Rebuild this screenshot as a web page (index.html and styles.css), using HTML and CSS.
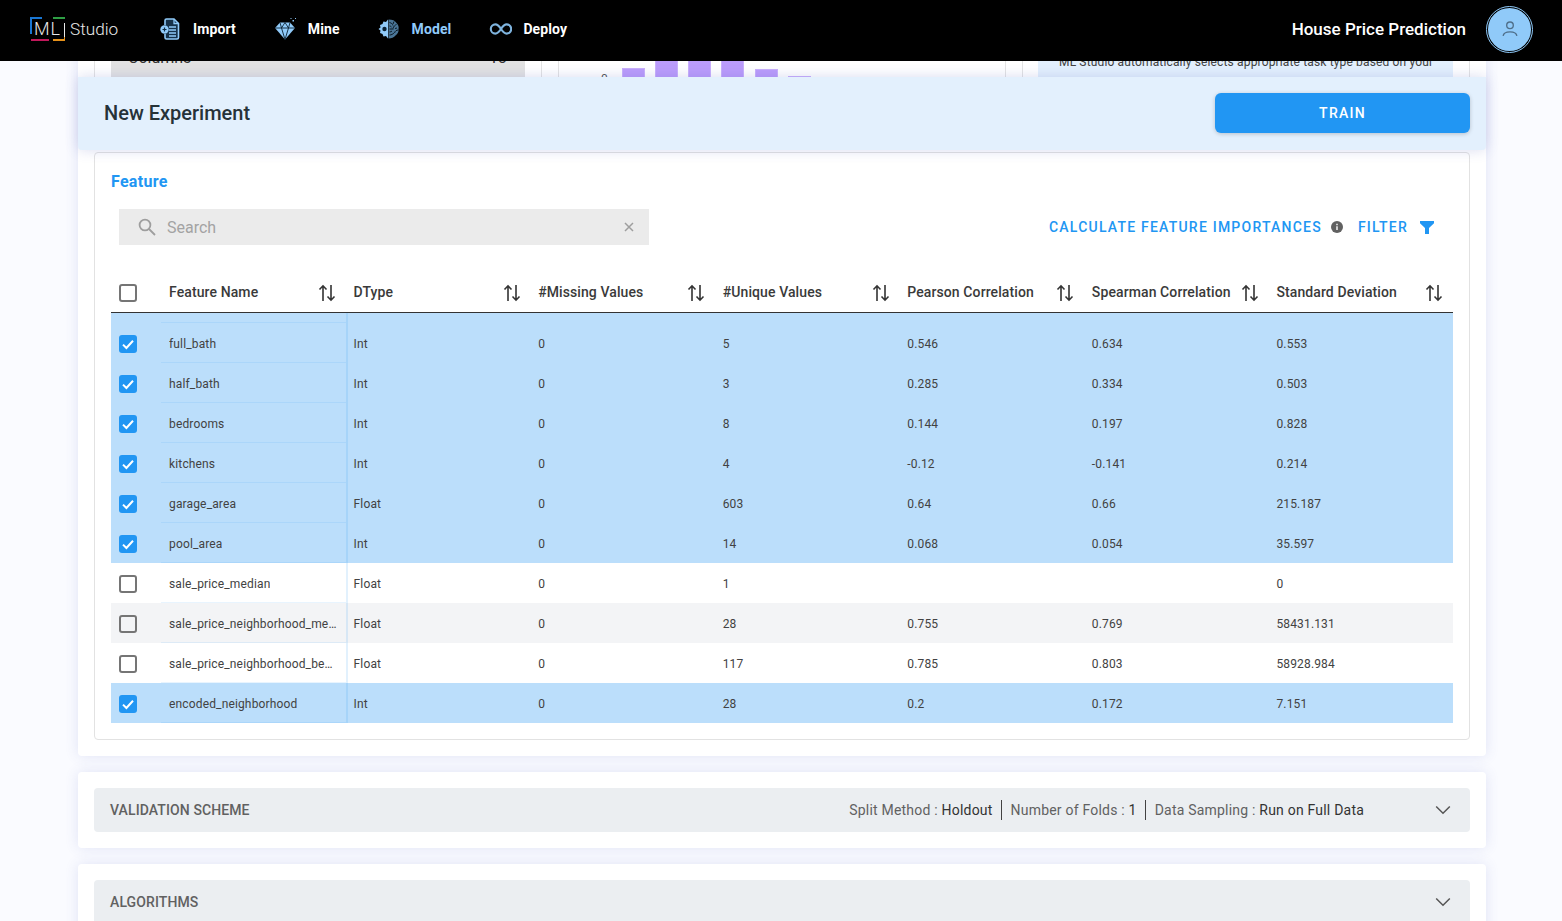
FILE: index.html
```html
<!DOCTYPE html>
<html lang="en">
<head>
<meta charset="utf-8">
<title>ML Studio</title>
<link rel="stylesheet" href="styles.css">
</head>
<body>
<svg class="defs" width="0" height="0" aria-hidden="true">
  <symbol id="sort" viewBox="0 0 18 18">
    <path d="M5 17V2M1.5 5.5 5 1.8l3.5 3.7M13 1v15M9.5 12.5 13 16.2l3.5-3.7" fill="none" stroke="currentColor" stroke-width="1.6"/>
  </symbol>
  <symbol id="check" viewBox="0 0 18 18">
    <rect width="18" height="18" rx="3" fill="#2196f3"/>
    <path d="M4 9.6 7.4 13 14 5.8" fill="none" stroke="#fff" stroke-width="2"/>
  </symbol>
  <symbol id="chev" viewBox="0 0 16 10">
    <path d="M1.2 1.5 8 8.2l6.8-6.7" fill="none" stroke="currentColor" stroke-width="1.5"/>
  </symbol>
</svg>

<header class="topbar">
  <div class="logo">
    <span class="logo-mark">ML<i class="br br-b"></i><i class="br br-g"></i><i class="br br-w"></i><i class="br br-r"></i><i class="br br-o"></i></span>
    <span class="logo-word">Studio</span>
  </div>
  <nav class="nav">
    <a class="nav-item">
      <svg class="nav-icon" viewBox="0 0 24 24"><path d="M7 8V3.500A1.500 1.500 0 0 1 8.500 2H16l4.500 4.500v14A1.500 1.500 0 0 1 19 22H8.500A1.500 1.500 0 0 1 7 20.500V17" fill="#16324a" stroke="#90caf9" stroke-width="1.600"/><path d="M16 2v4.500h4.500" fill="none" stroke="#90caf9" stroke-width="1.300"/><path d="M11 10h7M11 13h7M11 16h7M11 19h7" stroke="#90caf9" stroke-width="1.400"/><circle cx="6.500" cy="12.500" r="4.200" fill="#90caf9"/><path d="M4.500 12.500h4M6.500 10.500v4" stroke="#0d2a40" stroke-width="1.200"/></svg>
      <span>Import</span>
    </a>
    <a class="nav-item">
      <svg class="nav-icon" viewBox="0 0 24 24"><path d="M7 5.500h10l5 5.500L12 22.500 2 11z" fill="#90caf9"/><path d="M2 11h20M8.500 11 12 22.500 15.500 11 12 5.500zM7 5.500 8.500 11M17 5.500 15.500 11" fill="none" stroke="#0b2233" stroke-width=".9"/><path d="M19.500 3h1.500v1.500h-1.500zM22 1h1v1h-1zM17.500 1h1v1h-1z" fill="#90caf9"/></svg>
      <span>Mine</span>
    </a>
    <a class="nav-item nav-active">
      <svg class="nav-icon" viewBox="0 0 24 24"><path d="M11 2.500 9 5 6.500 4.500 5.500 7 3 8l.5 2.500L1.500 12l2 1.500L3 16l2.500 1 1 2.500L9 19l2 2.500z" fill="#90caf9"/><path d="M11.500 2.500c4 0 6.500 1 8 3.500 2 2 2.500 4 2 6 .5 3-1 5-3 6.500-1.500 2-4 3-7 3z" fill="#4a7596"/><path d="M12.500 5.500c2 .5 3 1.500 3.500 3M19.500 7.500c-1.500.5-3 2-3.500 4M12.500 12h4M21.500 13c-2 0-3.500 1-4 3M12.500 18c2 0 3.500-1 4.500-2M12.500 9c1 0 1.500.5 2 1M12.500 15c1 0 2-.5 2.500-1M17 4.500l-1 2.500M20 11l-2 .5" fill="none" stroke="#0b1a26" stroke-width="1"/><circle cx="7.500" cy="12" r="2.200" fill="#0b2233"/></svg>
      <span>Model</span>
    </a>
    <a class="nav-item">
      <svg class="nav-icon" viewBox="0 0 24 24"><path d="M13 12c-1.900-2.900-3.500-4.600-5.600-4.600a4.600 4.600 0 0 0 0 9.200C9.500 16.600 11.100 14.900 13 12c1.900-2.900 3.500-4.600 5.600-4.600a4.600 4.600 0 0 1 0 9.200C16.500 16.600 14.900 14.900 13 12z" fill="none" stroke="#7fb4de" stroke-width="2.100"/></svg>
      <span>Deploy</span>
    </a>
  </nav>
  <div class="project">House Price Prediction</div>
  <div class="avatar">
    <svg viewBox="0 0 24 24" class="avatar-icon"><circle cx="12" cy="8" r="3.600" fill="none" stroke="#4f6f8a" stroke-width="1.500"/><path d="M4.500 19.500c.5-3 3.500-4.300 7.500-4.300s7 1.300 7.500 4.300" fill="none" stroke="#4f6f8a" stroke-width="1.500"/></svg>
  </div>
</header>

<main class="page">
  <section class="card card-main">
    <div class="peek">
      <div class="peek-panel">
        <div class="peek-gray"><span>Columns</span><span>13</span></div>
      </div>
      <div class="peek-panel peek-chart">
        <span class="axis-zero">0</span>
        <div class="bars">
          <i style="height:10px"></i><i style="height:40px"></i><i style="height:40px"></i><i style="height:40px"></i><i style="height:9px"></i><i style="height:2px"></i>
        </div>
      </div>
      <div class="peek-panel">
        <div class="peek-note">ML Studio automatically selects appropriate task type based on your</div>
      </div>
    </div>

    <div class="exp-bar">
      <h1>New Experiment</h1>
      <button class="train">TRAIN</button>
    </div>

    <div class="feature-box">
      <h2>Feature</h2>
      <div class="toolbar">
        <div class="search">
          <svg class="search-icon" viewBox="0 0 18 18"><circle cx="7" cy="7" r="5.400" fill="none" stroke="currentColor" stroke-width="1.800"/><path d="m11 11 6 6" stroke="currentColor" stroke-width="1.800"/></svg>
          <span class="search-text">Search</span>
          <svg class="search-x" viewBox="0 0 10 10"><path d="m1 1 8 8M9 1 1 9" stroke="currentColor" stroke-width="1.500"/></svg>
        </div>
        <div class="actions">
          <span class="action">CALCULATE FEATURE IMPORTANCES</span>
          <svg class="info" viewBox="0 0 12 12"><circle cx="6" cy="6" r="6" fill="#616161"/><path d="M5.300 5.200h1.400v3.800H5.300zM5.300 2.800h1.400v1.400H5.300z" fill="#fff"/></svg>
          <span class="action action-filter">FILTER</span>
          <svg class="funnel" viewBox="0 0 14 13"><path d="M0 0h14v2.200L9 7v6H5V7L0 2.200z" fill="#2196f3"/></svg>
        </div>
      </div>

      <div class="table">
        <div class="row row-head">
          <div class="cell cell-check"><span class="box"></span></div>
          <div class="cell"><span class="head-label">Feature Name</span><svg class="sort"><use href="#sort"/></svg></div>
          <div class="cell"><span class="head-label">DType</span><svg class="sort"><use href="#sort"/></svg></div>
          <div class="cell"><span class="head-label">#Missing Values</span><svg class="sort"><use href="#sort"/></svg></div>
          <div class="cell"><span class="head-label">#Unique Values</span><svg class="sort"><use href="#sort"/></svg></div>
          <div class="cell"><span class="head-label">Pearson Correlation</span><svg class="sort"><use href="#sort"/></svg></div>
          <div class="cell"><span class="head-label">Spearman Correlation</span><svg class="sort"><use href="#sort"/></svg></div>
          <div class="cell"><span class="head-label">Standard Deviation</span><svg class="sort"><use href="#sort"/></svg></div>
        </div>
        <div class="row row-spacer is-selected"><div></div><div class="cell-name"></div></div>

        <div class="row is-selected"><div class="cell cell-check"><svg class="tick"><use href="#check"/></svg></div><div class="cell cell-name"><span>full_bath</span></div><div class="cell">Int</div><div class="cell">0</div><div class="cell">5</div><div class="cell">0.546</div><div class="cell">0.634</div><div class="cell">0.553</div></div>
        <div class="row is-selected"><div class="cell cell-check"><svg class="tick"><use href="#check"/></svg></div><div class="cell cell-name"><span>half_bath</span></div><div class="cell">Int</div><div class="cell">0</div><div class="cell">3</div><div class="cell">0.285</div><div class="cell">0.334</div><div class="cell">0.503</div></div>
        <div class="row is-selected"><div class="cell cell-check"><svg class="tick"><use href="#check"/></svg></div><div class="cell cell-name"><span>bedrooms</span></div><div class="cell">Int</div><div class="cell">0</div><div class="cell">8</div><div class="cell">0.144</div><div class="cell">0.197</div><div class="cell">0.828</div></div>
        <div class="row is-selected"><div class="cell cell-check"><svg class="tick"><use href="#check"/></svg></div><div class="cell cell-name"><span>kitchens</span></div><div class="cell">Int</div><div class="cell">0</div><div class="cell">4</div><div class="cell">-0.12</div><div class="cell">-0.141</div><div class="cell">0.214</div></div>
        <div class="row is-selected"><div class="cell cell-check"><svg class="tick"><use href="#check"/></svg></div><div class="cell cell-name"><span>garage_area</span></div><div class="cell">Float</div><div class="cell">0</div><div class="cell">603</div><div class="cell">0.64</div><div class="cell">0.66</div><div class="cell">215.187</div></div>
        <div class="row is-selected"><div class="cell cell-check"><svg class="tick"><use href="#check"/></svg></div><div class="cell cell-name"><span>pool_area</span></div><div class="cell">Int</div><div class="cell">0</div><div class="cell">14</div><div class="cell">0.068</div><div class="cell">0.054</div><div class="cell">35.597</div></div>
        <div class="row"><div class="cell cell-check"><span class="box"></span></div><div class="cell cell-name"><span>sale_price_median</span></div><div class="cell">Float</div><div class="cell">0</div><div class="cell">1</div><div class="cell"></div><div class="cell"></div><div class="cell">0</div></div>
        <div class="row is-striped"><div class="cell cell-check"><span class="box"></span></div><div class="cell cell-name"><span>sale_price_neighborhood_mean</span></div><div class="cell">Float</div><div class="cell">0</div><div class="cell">28</div><div class="cell">0.755</div><div class="cell">0.769</div><div class="cell">58431.131</div></div>
        <div class="row"><div class="cell cell-check"><span class="box"></span></div><div class="cell cell-name"><span>sale_price_neighborhood_bedrooms</span></div><div class="cell">Float</div><div class="cell">0</div><div class="cell">117</div><div class="cell">0.785</div><div class="cell">0.803</div><div class="cell">58928.984</div></div>
        <div class="row is-selected"><div class="cell cell-check"><svg class="tick"><use href="#check"/></svg></div><div class="cell cell-name"><span>encoded_neighborhood</span></div><div class="cell">Int</div><div class="cell">0</div><div class="cell">28</div><div class="cell">0.2</div><div class="cell">0.172</div><div class="cell">7.151</div></div>
      </div>
    </div>
  </section>

  <section class="card card-fold">
    <div class="fold">
      <span class="fold-title">VALIDATION SCHEME</span>
      <div class="fold-meta">
        <span class="meta">Split Method : <b>Holdout</b></span>
        <span class="meta">Number of Folds : <b>1</b></span>
        <span class="meta">Data Sampling : <b>Run on Full Data</b></span>
      </div>
      <svg class="chev"><use href="#chev"/></svg>
    </div>
  </section>

  <section class="card card-fold">
    <div class="fold">
      <span class="fold-title">ALGORITHMS</span>
      <svg class="chev"><use href="#chev"/></svg>
    </div>
  </section>
</main>
</body>
</html>
```

FILE: styles.css
```css
* { box-sizing: border-box; }
html, body { height: 921px; overflow: hidden; }
body {
  margin: 0;
  background: #fafbff;
  font-family: Roboto, "Liberation Sans", sans-serif;
  color: #424242;
}
.defs { position: absolute; }

/* top bar */
.topbar {
  position: relative;
  z-index: 3;
  height: 61px;
  background: #000;
  display: flex;
  align-items: center;
  padding: 0 29px 4px 30px;
  color: #fff;
}
.logo { display: flex; align-items: center; width: 128px; flex: none; }
.logo-mark {
  position: relative;
  display: block;
  width: 35px;
  height: 23px;
  font-size: 18px;
  font-weight: 300;
  letter-spacing: 1px;
  line-height: 23px;
  text-align: center;
  color: #e8e8e8;
}
.br { position: absolute; display: block; }
.br-b { left: 0; top: 0; width: 12px; height: 17px; border-left: 2px solid #1976d2; border-top: 2px solid #1976d2; }
.br-g { right: 0; top: 0; width: 12px; height: 2px; background: #2e9e44; }
.br-w { right: 0; top: 6px; width: 1px; height: 15px; background: #e8e8e8; }
.br-r { left: 1px; bottom: -1px; width: 18px; height: 2px; background: #c2185b; }
.br-o { right: 0; bottom: -1px; width: 12px; height: 4px; border-right: 1px solid #e6911a; border-bottom: 2px solid #e6911a; }
.logo-word { margin-left: 5px; font-size: 17.200px; font-weight: 300; color: #e8e8e8; }
.nav { display: flex; gap: 37px; }
.nav-item { display: flex; align-items: center; gap: 11px; font-size: 14px; font-weight: 700; letter-spacing: .1px; }
.nav-icon { width: 24px; height: 24px; flex: none; }
.nav-active { color: #90caf9; }
.project { margin-left: auto; margin-right: 20px; font-size: 17px; font-weight: 500; }
.avatar {
  width: 47px;
  height: 47px;
  border-radius: 50%;
  background: #90caf9;
  border: 2px solid #000;
  outline: 1px solid #90caf9;
  outline-offset: -1px;
  display: flex;
  align-items: center;
  justify-content: center;
  margin-top: 1px;
}
.avatar-icon { width: 22px; height: 22px; }

/* page */
.page { width: 1408px; margin-left: 78px; }
.card {
  background: #fff;
  border-radius: 4px;
  box-shadow: 0 0 14px rgba(63, 81, 181, .14);
}
.card-main { padding-bottom: 16px; }
.card-fold { margin-top: 16px; padding: 16px; }

/* content scrolled behind the header */
.peek {
  display: grid;
  grid-template-columns: repeat(3, minmax(0, 1fr));
  gap: 16px;
  height: 30px;
  margin-top: -14px;
  padding: 0 16px;
  overflow: hidden;
}
.peek-panel {
  height: 60px;
  border: 1px solid #e3e3e3;
  padding: 0 16px;
}
.peek-gray {
  height: 100%;
  background: #e2e2e2;
  display: flex;
  justify-content: space-between;
  padding: 2px 18px 0 17px;
  font-size: 16px;
  line-height: 16px;
  color: #333;
}
.peek-note {
  height: 100%;
  background: #e3f0fd;
  margin-left: -1px;
  padding: 6px 21px;
  font-size: 12px;
  letter-spacing: .15px;
  line-height: 16px;
  color: #424242;
  white-space: nowrap;
  overflow: hidden;
}
.peek-chart {
  display: flex;
  align-items: flex-start;
  padding: 0 0 0 42px;
}
.axis-zero { margin-top: 24px; font-size: 12px; line-height: 14px; color: #555; }
.bars {
  display: flex;
  align-items: flex-end;
  gap: 10.200px;
  height: 30px;
  margin-left: 14px;
}
.bars i { display: block; width: 23px; background: #bb9cfb; border: 1px solid #c9b0fc; }

/* experiment bar */
.exp-bar {
  position: relative;
  z-index: 2;
  height: 73px;
  background: #e3f0fd;
  border-radius: 0 0 4px 4px;
  box-shadow: 0 0 14px rgba(63, 81, 181, .2);
  display: flex;
  align-items: center;
  justify-content: space-between;
  padding: 0 16px 1px 26px;
}
.exp-bar h1 { margin: 0; font-size: 20px; font-weight: 500; color: #263238; }
.train {
  width: 255px;
  height: 40px;
  border: 0;
  border-radius: 6px;
  background: #2196f3;
  box-shadow: 0 1px 4px rgba(0, 0, 0, .2);
  color: #fff;
  font: 500 14px Roboto, sans-serif;
  letter-spacing: 1.250px;
}

/* feature box */
.feature-box {
  margin: 2px 16px 0;
  height: 588px;
  border: 1px solid #e2e2e2;
  border-radius: 4px;
  padding: 19px 16px 0;
}
.feature-box h2 {
  margin: 0;
  font-size: 16px;
  line-height: 19px;
  font-weight: 700;
  letter-spacing: .3px;
  color: #2196f3;
}
.toolbar {
  display: flex;
  align-items: center;
  justify-content: space-between;
  height: 36px;
  margin: 18px 19px 0 8px;
}
.search {
  width: 530px;
  height: 36px;
  background: #ebebeb;
  display: flex;
  align-items: center;
  padding: 0 15px 0 19px;
  color: #9e9e9e;
}
.search-icon { width: 18px; height: 18px; flex: none; }
.search-text { margin-left: 11px; font-size: 16px; color: #a3a3a3; }
.search-x { width: 10px; height: 10px; margin-left: auto; }
.actions { display: flex; align-items: center; }
.action { font-size: 14px; font-weight: 500; letter-spacing: 1.220px; color: #2196f3; }
.info { width: 12px; height: 12px; margin-left: 9px; }
.action-filter { margin-left: 15px; }
.funnel { width: 14px; height: 13px; margin-left: 12px; }

/* table */
.table { margin-top: 27px; }
.row {
  display: grid;
  grid-template-columns: 50px repeat(7, minmax(0, 1fr));
  height: 40px;
  font-size: 12px;
  letter-spacing: .15px;
}
.cell { display: flex; align-items: center; padding: 2px 0 0 8px; min-width: 0; }
.cell-name {
  padding-right: 8px;
  box-shadow: 2px 0 0 rgba(33, 150, 243, .13);
  border-bottom: 1px solid rgba(33, 150, 243, .1);
}
.cell-name span { overflow: hidden; white-space: nowrap; text-overflow: ellipsis; }
.row-head {
  border-bottom: 1px solid #333;
  height: 41px;
  font-size: 14px;
  letter-spacing: .1px;
  font-weight: 500;
  color: #3a3a3a;
}
.row-head .cell { padding-top: 0; }
.row-head .box { margin-top: 2px; }
.head-label { white-space: nowrap; }
.sort { width: 18px; height: 18px; margin: 2px 9.500px 0 auto; flex: none; color: #333; }
.row-spacer { height: 10px; }
.is-selected { background: #bbdefb; }
.is-striped { background: #f3f4f6; }
.box {
  display: block;
  width: 18px;
  height: 18px;
  border: 2px solid #757575;
  border-radius: 3px;
}
.tick { display: block; width: 18px; height: 18px; }

/* collapsed sections */
.fold {
  display: flex;
  align-items: center;
  height: 44px;
  background: #ebeef1;
  border-radius: 4px;
  padding: 0 19px 0 16px;
  font-size: 14px;
  color: #616161;
}
.fold-title { font-weight: 500; letter-spacing: .1px; }
.fold-meta { display: flex; margin-left: auto; margin-right: 71px; letter-spacing: .21px; }
.meta { padding: 0 8.500px; line-height: 20px; border-left: 1px solid #424242; }
.meta:first-child { border-left: 0; }
.meta:last-child { padding-right: 0; }
.meta b { font-weight: 400; color: #333; }
.chev { width: 16px; height: 10px; margin-left: auto; flex: none; color: #555; }
.fold-meta + .chev { margin-left: 0; }
```
